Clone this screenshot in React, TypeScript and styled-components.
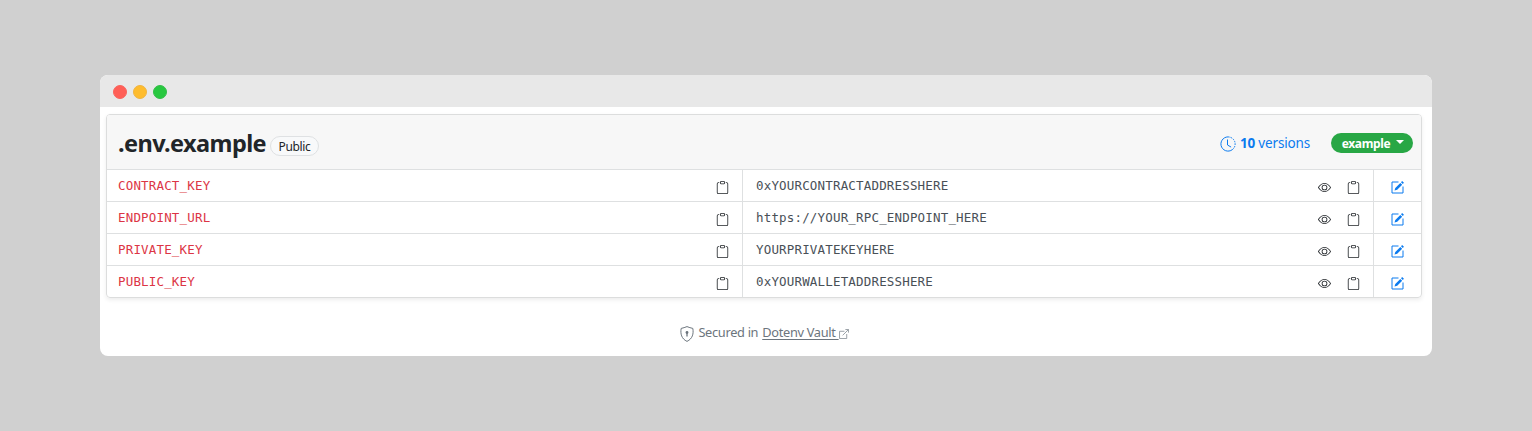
import React from 'react';
import styled, { createGlobalStyle } from 'styled-components';
import { BsClipboard, BsEye } from 'react-icons/bs';

const GlobalStyle = createGlobalStyle`
  * { box-sizing: border-box; }
  body {
    margin: 0;
    background: #d0d0d0;
    font-family: 'Noto Sans', 'Open Sans', sans-serif;
    color: #212529;
  }
`;

const Page = styled.main`
  height: 431px;
  padding: 75px 100px;
`;

const Window = styled.section`
  height: 281px;
  background: #fff;
  border-radius: 8px;
  overflow: hidden;
`;

const TitleBar = styled.div`
  display: flex;
  align-items: center;
  gap: 6px;
  height: 32px;
  padding: 2px 0 0 13px;
  background: #e8e8e8;
`;

const Dot = styled.span<{ $fill: string; $edge: string }>`
  width: 14px;
  height: 14px;
  border-radius: 50%;
  background: ${(p) => p.$fill};
  border: 1px solid ${(p) => p.$edge};
`;

const Card = styled.div`
  margin: 7px 10px 0 6px;
  height: 184px;
  border: 1px solid #dcdddd;
  border-radius: 4px;
  box-shadow: 0 2px 4px rgba(0, 0, 0, 0.075);
  overflow: hidden;
`;

const Header = styled.header`
  display: flex;
  align-items: center;
  height: 54px;
  padding: 0 8px 0 11px;
  background: #f7f7f7;
`;

const Title = styled.h1`
  margin: 1px 0 0;
  font-size: 23.5px;
  line-height: 32px;
  font-weight: 700;
  letter-spacing: -0.58px;
  white-space: nowrap;
`;

const Badge = styled.span`
  display: flex;
  align-items: center;
  justify-content: center;
  width: 49px;
  height: 20px;
  margin: 8px 0 0 4px;
  border: 1px solid #dfe1e3;
  border-radius: 10px;
  background: #f8f9fa;
  font-size: 12px;
  letter-spacing: -0.35px;
`;

const Versions = styled.a`
  display: flex;
  align-items: center;
  gap: 4px;
  margin: 1px 0 0 auto;
  color: #0b7bef;
  font-size: 13.5px;
  letter-spacing: -0.17px;
  white-space: nowrap;

  svg { margin-top: 2px; }
`;

const EnvButton = styled.button`
  display: flex;
  align-items: center;
  justify-content: center;
  gap: 6px;
  width: 82px;
  height: 20px;
  margin: 2px 0 0 21px;
  padding: 1px 0 0 2px;
  border: 0;
  border-radius: 10px;
  background: #28a745;
  color: #fff;
  font: 700 12px 'Noto Sans', sans-serif;
  letter-spacing: -0.35px;
`;

const Caret = styled.span`
  margin-top: -3px;
  border-top: 4px solid #fff;
  border-left: 4px solid transparent;
  border-right: 4px solid transparent;
`;

const Row = styled.div`
  display: grid;
  grid-template-columns: 636px 631px 1fr;
  height: 32px;
  border-top: 1px solid #dee0e1;
`;

const Cell = styled.div<{ $pad: string }>`
  display: flex;
  align-items: center;
  gap: 16px;
  padding: ${(p) => p.$pad};
  border-right: 1px solid #dee0e1;
  color: #212529;

  &:last-child { border-right: 0; }
  svg { flex: none; margin-top: 4px; }
`;

const Mono = styled.code<{ $color: string }>`
  margin-right: auto;
  color: ${(p) => p.$color};
  font-family: 'DejaVu Sans Mono', monospace;
  font-size: 12.5px;
  letter-spacing: 0.17px;
  line-height: 20px;
`;

const Footer = styled.footer`
  display: flex;
  justify-content: center;
  align-items: center;
  gap: 4px;
  height: 20px;
  margin: 24px 3px 0 0;
  color: #6c757d;
  font-size: 12.8px;
  letter-spacing: -0.31px;
  white-space: nowrap;

  > svg { margin-top: 3px; }
`;

const VaultLink = styled.a`
  display: flex;
  align-items: center;
  text-decoration: underline;
  text-underline-offset: 2px;
  white-space: pre;

  svg { margin: 3px 0 0; }
`;

const ClockIcon = () => (
  <svg width="16" height="16" viewBox="0 0 16 16" fill="none" stroke="#0b7bef">
    <path d="M8 .9a7.1 7.1 0 1 0 5.600 11.500" />
    <path d="M8 .9a7.1 7.1 0 0 1 5.600 11.500" strokeDasharray="1.6 1" />
    <path d="M7.5 3.500V9l3.600 2.100" />
  </svg>
);

const EditIcon = () => (
  <svg width="13" height="13" viewBox="0 0 13 13" fill="#0b7bef">
    <path d="M7.500 1H1v11h11V5.500" fill="none" stroke="#0b7bef" />
    <path d="M3.500 9.600l.8-2.700L9.300 1.900l1.900 1.900-5 5zM10 1.200l.9-.9q.3-.3.6 0l1.200 1.200q.3.3 0 .6l-.9.9z" />
  </svg>
);

const ShieldIcon = () => (
  <svg width="14" height="16" viewBox="0 0 14 16" fill="none" stroke="#6c757d">
    <path d="M7 .6C5.2 1.4 3 2 1.2 2.4.2 7.7 1.5 12.8 7 15.4c5.5-2.6 6.8-7.7 5.8-13C11 2 8.8 1.4 7 .6z" />
    <circle cx="7" cy="6.5" r="1.4" fill="#6c757d" stroke="none" />
    <path d="M7 7v3.5" strokeWidth="1.3" />
  </svg>
);

const ExternalIcon = () => (
  <svg width="10" height="10" viewBox="0 0 11 11" fill="none" stroke="#858d94" strokeWidth=".9">
    <path d="M6 2.500H.6v8h7.900V5.500M7 .6h3.400V4M10.400.6L4 7" />
  </svg>
);

const variables = [
  ['CONTRACT_KEY', '0xYOURCONTRACTADDRESSHERE'],
  ['ENDPOINT_URL', 'https://YOUR_RPC_ENDPOINT_HERE'],
  ['PRIVATE_KEY', 'YOURPRIVATEKEYHERE'],
  ['PUBLIC_KEY', '0xYOURWALLETADDRESSHERE'],
];

export default function App() {
  return (
    <Page>
      <GlobalStyle />
      <Window>
        <TitleBar>
          <Dot $fill="#ff5f57" $edge="#f9645d" />
          <Dot $fill="#febc2e" $edge="#f0b440" />
          <Dot $fill="#28c840" $edge="#34bd49" />
        </TitleBar>
        <Card>
          <Header>
            <Title>.env.example</Title>
            <Badge>Public</Badge>
            <Versions>
              <ClockIcon />
              <span><b>10</b> versions</span>
            </Versions>
            <EnvButton>example<Caret /></EnvButton>
          </Header>
          {variables.map(([name, value]) => (
            <Row key={name}>
              <Cell $pad="0 13px 0 11px">
                <Mono $color="#dc3545">{name}</Mono>
                <BsClipboard size={13} />
              </Cell>
              <Cell $pad="0 13px 0 13px">
                <Mono $color="#495057">{value}</Mono>
                <BsEye size={13} />
                <BsClipboard size={13} />
              </Cell>
              <Cell $pad="0 0 0 17px">
                <EditIcon />
              </Cell>
            </Row>
          ))}
        </Card>
        <Footer>
          <ShieldIcon />
          <span>Secured in</span>
          <VaultLink>
            {'Dotenv Vault '}
            <ExternalIcon />
          </VaultLink>
        </Footer>
      </Window>
    </Page>
  );
}
